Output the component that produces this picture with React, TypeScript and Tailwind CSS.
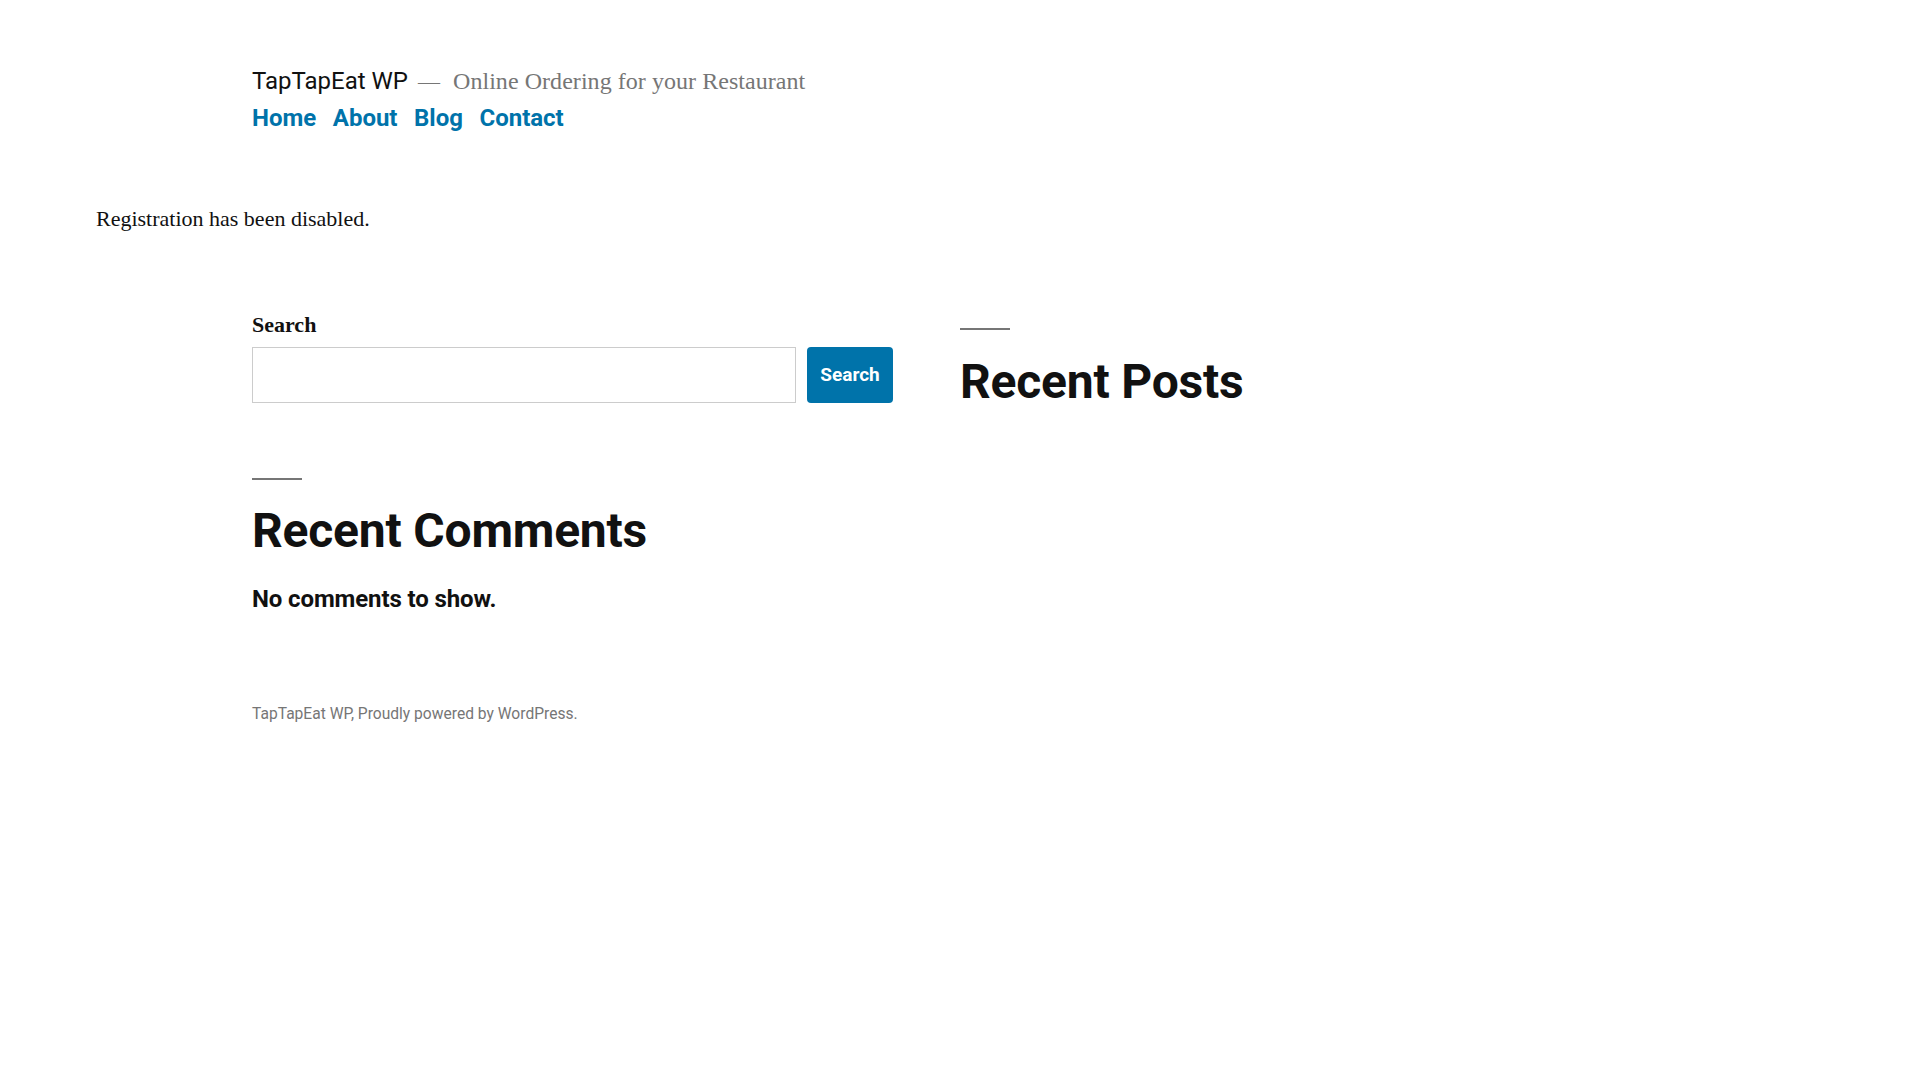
import React from 'react';

const sans = "font-['Roboto',sans-serif]";
const serif = "font-['Liberation_Serif',serif]";

const navItems = ['Home', 'About', 'Blog', 'Contact'];

const Separator: React.FC = () => <div className="w-[50px] h-[2px] bg-[#767676]" />;

const App: React.FC = () => {
  return (
    <div className="min-h-screen bg-white text-[#111]">
      {/* Header */}
      <header className="pl-[252px] pt-[66px]">
        <div className="flex items-baseline leading-[30px]">
          <span className={`${sans} text-[24px] text-[#111]`}>TapTapEat WP</span>
          <span className={`${serif} text-[22px] text-[#767676] ml-[10px] mr-[13px]`}>—</span>
          <span className={`${serif} text-[24px] tracking-[0.05px] text-[#767676]`}>Online Ordering for your Restaurant</span>
        </div>
        <nav className={`${sans} mt-[6px] flex gap-[16.5px] text-[24px] font-bold leading-[30px] text-[#0073aa]`}>
          {navItems.map((item) => (
            <a key={item} href="#" className="hover:underline">
              {item}
            </a>
          ))}
        </nav>
      </header>

      {/* Notice */}
      <p className={`${serif} pl-[96px] mt-[71px] text-[22px] leading-[30px] text-[#111]`}>
        Registration has been disabled.
      </p>

      {/* Widgets */}
      <section className="pl-[252px] mt-[76px] grid grid-cols-[641px_1fr] gap-x-[67px]">
        <div>
          <label className={`${serif} block text-[22px] font-bold leading-[30px]`}>Search</label>
          <div className="mt-[7px] flex gap-[11px]">
            <input className="h-[56px] w-[544px] border border-[#cccccc] bg-white outline-none" />
            <button className={`${sans} h-[56px] w-[86px] rounded-[4px] bg-[#0073aa] text-[19px] font-bold text-white`}>
              Search
            </button>
          </div>
        </div>

        <div className="pt-[18px]">
          <Separator />
          <h2 className={`${sans} mt-[22px] text-[48px] font-bold leading-[60px] tracking-[-0.2px]`}>Recent Posts</h2>
        </div>

        <div className="mt-[66px]">
          <Separator />
          <h2 className={`${sans} mt-[21px] text-[48px] font-bold leading-[60px] tracking-[-0.2px]`}>Recent Comments</h2>
          <p className={`${sans} mt-[23px] text-[24px] font-bold leading-[30px] tracking-[-0.12px]`}>No comments to show.</p>
        </div>
      </section>

      {/* Footer */}
      <footer className={`${sans} pl-[252px] mt-[88px] text-[15.6px] leading-[24px] text-[#767676]`}>
        <a href="#" className="hover:underline">TapTapEat WP</a>, Proudly powered by{' '}
        <a href="#" className="hover:underline">WordPress</a>.
      </footer>
    </div>
  );
};

export default App;
